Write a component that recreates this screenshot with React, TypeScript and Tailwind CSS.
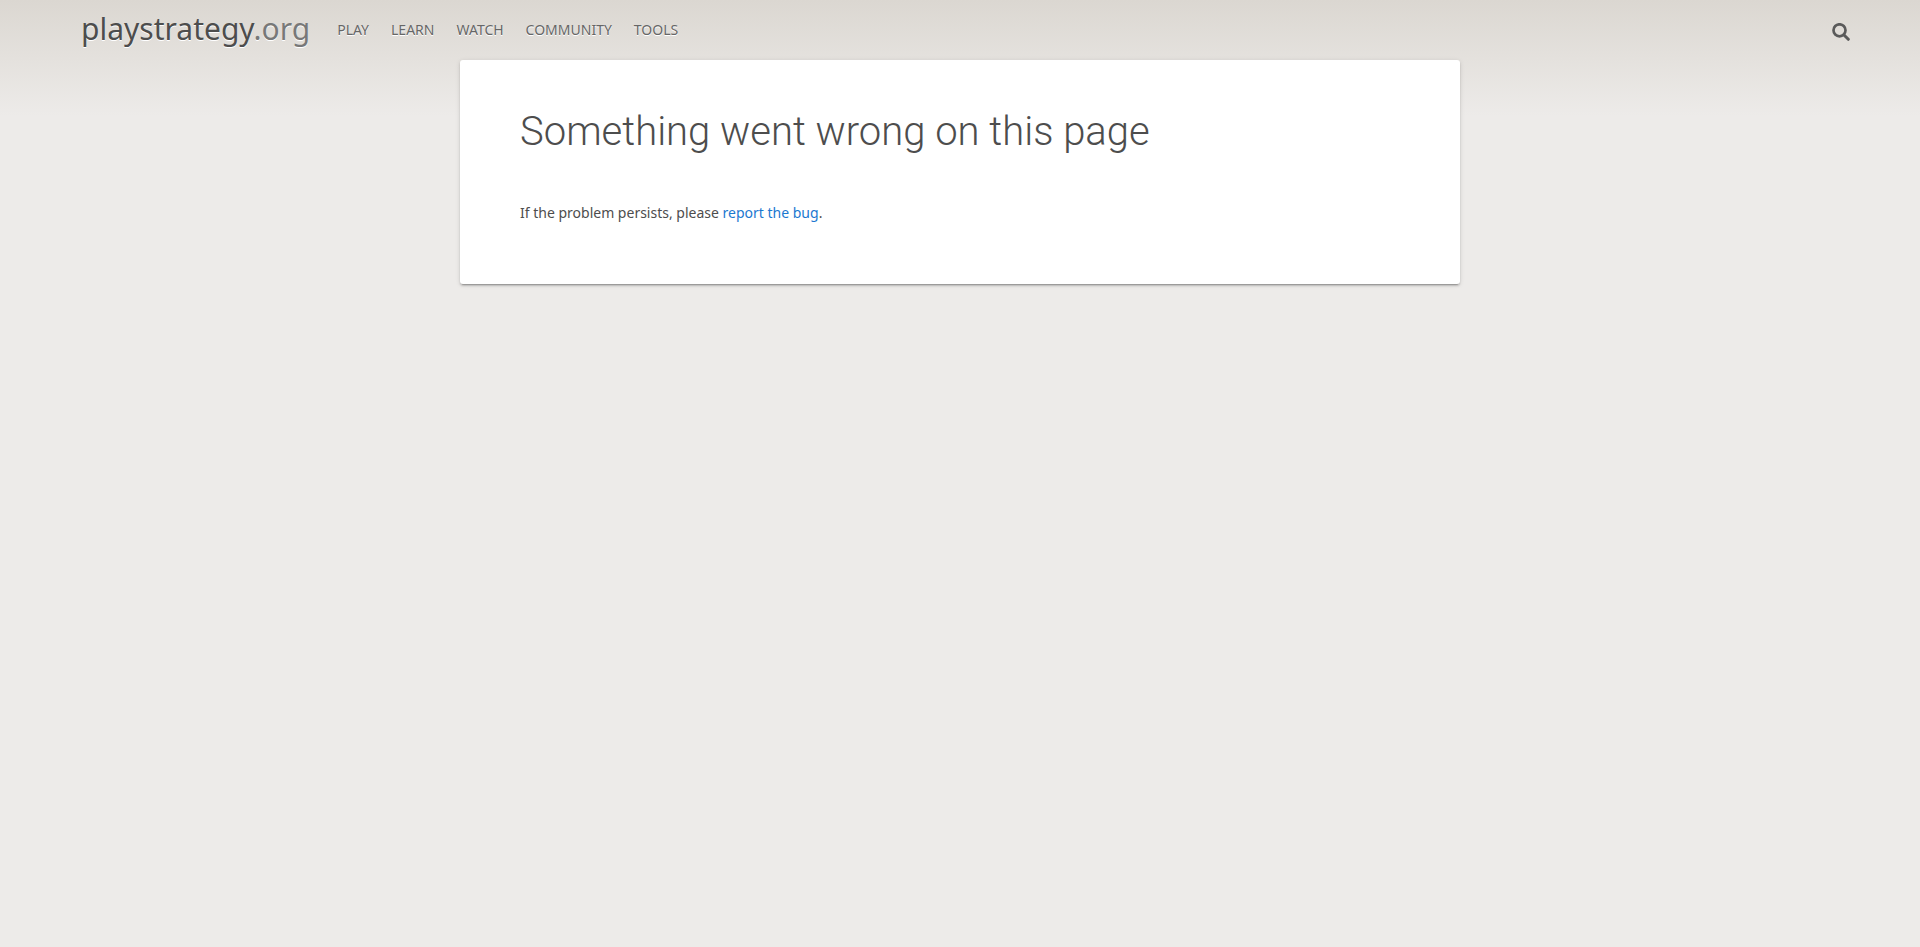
const sections = ["Play", "Learn", "Watch", "Community", "Tools"];

function SearchIcon() {
  return (
    <svg viewBox="0 0 18 18" className="size-[18px]" fill="none" stroke="currentColor" aria-hidden="true">
      <circle cx="7.5" cy="7.3" r="6" strokeWidth="2.7" />
      <path d="M12 12 16.3 16.3" strokeWidth="3" strokeLinecap="round" />
    </svg>
  );
}

function TopBar() {
  return (
    <header className="flex h-[60px] items-start justify-between">
      <div className="flex items-start">
        <a href="/" className="ml-[81px] text-[30px] leading-[58px] text-[#4d4d4d] [text-shadow:0_1px_0_#fff]">
          playstrategy<span className="text-[#787878]">.org</span>
        </a>
        <nav aria-label="Main" className="ml-4 flex">
          {sections.map((name) => (
            <a key={name} href={`/${name.toLowerCase()}`} className="px-[11px] text-sm leading-[60px] text-[#666] uppercase [text-shadow:0_1px_0_#fff]">
              {name}
            </a>
          ))}
        </nav>
      </div>
      <button type="button" aria-label="Search" className="mt-[23px] mr-[70px] text-[#5a5a5a]">
        <SearchIcon />
      </button>
    </header>
  );
}

export default function App() {
  return (
    <div className="min-h-screen bg-[#edebe9] bg-[linear-gradient(to_bottom,#dbd7d1,#edebe9_116px)] font-['Noto_Sans',sans-serif] text-sm text-[#4d4d4d]">
      <TopBar />
      <main className="mx-auto w-full max-w-[1000px] rounded-[3px] bg-white px-15 pt-[42px] pb-[59px] shadow-[0_2px_2px_0_rgba(0,0,0,0.14),0_3px_1px_-2px_rgba(0,0,0,0.2),0_1px_5px_0_rgba(0,0,0,0.12)]">
        <h1 className="mb-[39px] font-['Roboto',sans-serif] text-[40px] leading-[60px] font-light">
          Something went wrong on this page
        </h1>
        <p className="leading-6">
          If the problem persists, please <a href="/contact" className="text-[#1b78d0]">report the bug</a>.
        </p>
      </main>
    </div>
  );
}
